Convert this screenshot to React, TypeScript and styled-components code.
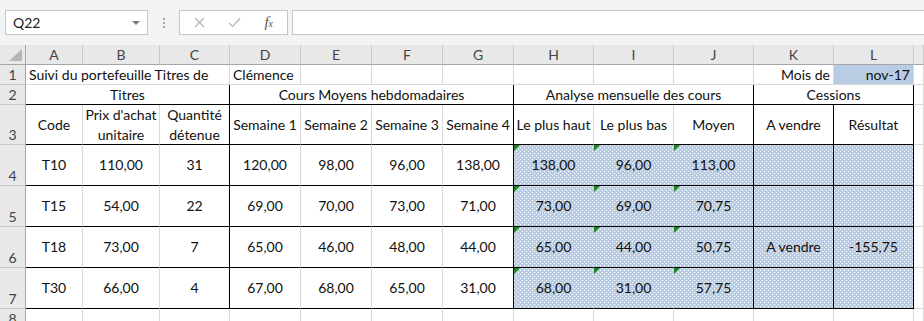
import styled, { createGlobalStyle, css } from "styled-components";

const GlobalStyle = createGlobalStyle`
  body { margin: 0; background: #ffffff; }
  *, *::before, *::after { box-sizing: border-box; }
`;

const FONT = `Lato, "Liberation Sans", sans-serif`;

const LETTERS = ["A", "B", "C", "D", "E", "F", "G", "H", "I", "J", "K", "L", ""];
const WIDTHS = [57, 77, 70, 71, 71, 71, 71, 80, 80, 80, 80, 80];
const HEIGHTS = [20, 20, 40, 41, 41, 41, 41, 20];

type Spec = { text?: string; span?: number; align?: "left" | "center" | "right" };

const rowsData: Spec[][] = [
  [
    { text: "Suivi du portefeuille Titres de", span: 3, align: "left" },
    { text: "Clémence", align: "left" },
    {}, {}, {}, {}, {}, {},
    { text: "Mois de", align: "right" },
    { text: "nov-17", align: "right" },
  ],
  [
    { text: "Titres", span: 3 },
    { text: "Cours Moyens hebdomadaires", span: 4 },
    { text: "Analyse mensuelle des cours", span: 3 },
    { text: "Cessions", span: 2 },
  ],
  [
    { text: "Code" },
    { text: "Prix d'achat\nunitaire" },
    { text: "Quantité\ndétenue" },
    { text: "Semaine 1" },
    { text: "Semaine 2" },
    { text: "Semaine 3" },
    { text: "Semaine 4" },
    { text: "Le plus haut" },
    { text: "Le plus bas" },
    { text: "Moyen" },
    { text: "A vendre" },
    { text: "Résultat" },
  ],
  ...[
    ["T10", "110,00", "31", "120,00", "98,00", "96,00", "138,00", "138,00", "96,00", "113,00", "", ""],
    ["T15", "54,00", "22", "69,00", "70,00", "73,00", "71,00", "73,00", "69,00", "70,75", "", ""],
    ["T18", "73,00", "7", "65,00", "46,00", "48,00", "44,00", "65,00", "44,00", "50,75", "A vendre", "-155,75"],
    ["T30", "66,00", "4", "67,00", "68,00", "65,00", "31,00", "68,00", "31,00", "57,75", "", ""],
  ].map((r) => r.map((text) => ({ text }))),
  Array.from({ length: 12 }, () => ({})),
];

export default function App() {
  return (
    <>
      <GlobalStyle />
      <Window>
        <Toolbar>
          <NameBox>
            <NameText>Q22</NameText>
            <DropArrow />
          </NameBox>
          <Grip>
            <Dot />
            <Dot />
            <Dot />
          </Grip>
          <FxGroup>
            <svg width="11" height="11" viewBox="0 0 11 11">
              <path d="M1 1 L10 10 M10 1 L1 10" stroke="#b3b3b3" strokeWidth="1.2" fill="none" />
            </svg>
            <svg width="13" height="11" viewBox="0 0 13 11">
              <path d="M1 6 L4.5 9.5 L12 1.5" stroke="#b3b3b3" strokeWidth="1.2" fill="none" />
            </svg>
            <FxLabel>
              f<small>x</small>
            </FxLabel>
          </FxGroup>
          <FormulaInput />
        </Toolbar>
        <Sheet>
          <Corner>
            <CornerMark />
          </Corner>
          {LETTERS.map((l, i) => (
            <ColHead key={"h" + i}>{l}</ColHead>
          ))}
          {rowsData.map((row, r) => {
            const rowNo = r + 1;
            let col = 0;
            const cells = row.map((spec, k) => {
              const span = spec.span ?? 1;
              const first = col;
              const last = col + span - 1;
              col += span;
              const framed = rowNo >= 2 && rowNo <= 7;
              const body = rowNo >= 4 && rowNo <= 7;
              const dots = body && first >= 7 && first <= 11;
              let right: Edge = "grid";
              if (framed && [2, 6, 9, 10, 11].includes(last)) right = "black";
              else if (dots && (last === 7 || last === 8)) right = "none";
              return (
                <Cell
                  key={k}
                  $span={span}
                  $align={spec.align ?? "center"}
                  $right={right}
                  $bottom={framed ? "black" : "grid"}
                  $fill={dots ? "dots" : rowNo === 1 && first === 11 ? "solid" : "none"}
                  $flag={body && first >= 7 && first <= 9}
                >
                  {spec.text}
                </Cell>
              );
            });
            return [
              <RowHead key={"r" + r} $h={HEIGHTS[r]}>
                {rowNo}
              </RowHead>,
              ...cells,
              <Cell key="m" $span={1} $align="left" $right="grid" $bottom="grid" $fill="none" $flag={false} />,
            ];
          })}
        </Sheet>
      </Window>
    </>
  );
}

type Edge = "grid" | "black" | "none";

const Window = styled.div`
  width: 924px;
  height: 321px;
  overflow: hidden;
  background: #f3f3f3;
  font-family: ${FONT};
`;

const Toolbar = styled.div`
  display: flex;
  align-items: stretch;
  height: 45px;
  padding: 10px 0 10px 5px;
  background: #f3f3f3;
`;

const NameBox = styled.div`
  width: 143px;
  display: flex;
  align-items: center;
  justify-content: space-between;
  padding: 0 7px 0 7px;
  background: #fff;
  border: 1px solid #c6c6c6;
`;

const NameText = styled.span`
  font-size: 14px;
  color: #222;
`;

const DropArrow = styled.span`
  width: 0;
  height: 0;
  border-left: 4px solid transparent;
  border-right: 4px solid transparent;
  border-top: 4px solid #7a7a7a;
`;

const Grip = styled.div`
  width: 31px;
  display: flex;
  flex-direction: column;
  align-items: center;
  justify-content: center;
  gap: 2px;
`;

const Dot = styled.span`
  width: 2px;
  height: 2px;
  background: #a8a8a8;
`;

const FxGroup = styled.div`
  width: 109px;
  display: flex;
  align-items: center;
  justify-content: space-between;
  padding: 0 14px 0 14px;
  background: #fff;
  border: 1px solid #c6c6c6;
`;

const FxLabel = styled.span`
  font-family: "Liberation Serif", serif;
  font-style: italic;
  font-size: 15px;
  color: #555;
  small {
    font-size: 10px;
  }
`;

const FormulaInput = styled.div`
  flex: 1;
  margin-left: 4px;
  margin-right: -2px;
  background: #fff;
  border: 1px solid #c6c6c6;
`;

const Sheet = styled.div`
  display: grid;
  grid-template-columns: 26px ${WIDTHS.map((w) => w + "px").join(" ")} 1fr;
  grid-template-rows: 20px ${HEIGHTS.map((h) => h + "px").join(" ")};
  height: 276px;
  overflow: hidden;
  background: #fff;
  font-size: 14px;
  color: #111;
`;

const headBase = css`
  background: #e8e8e8;
  color: #444;
  font-size: 14px;
  display: flex;
`;

const Corner = styled.div`
  ${headBase};
  position: relative;
  border-right: 1px solid #a6a6a6;
  border-bottom: 1px solid #a6a6a6;
`;

const CornerMark = styled.span`
  position: absolute;
  right: 3px;
  bottom: 3px;
  width: 0;
  height: 0;
  border-left: 13px solid transparent;
  border-bottom: 12px solid #b5b5b5;
`;

const ColHead = styled.div`
  ${headBase};
  align-items: center;
  justify-content: center;
  border-right: 1px solid #c9c9c9;
  border-bottom: 1px solid #a6a6a6;
`;

const RowHead = styled.div<{ $h: number }>`
  ${headBase};
  align-items: ${(p) => (p.$h > 20 ? "flex-end" : "center")};
  justify-content: center;
  padding-bottom: ${(p) => (p.$h > 20 ? "1px" : "0")};
  border-right: 1px solid #a6a6a6;
  border-bottom: 1px solid #c9c9c9;
`;

const edgeColor = (e: Edge) => (e === "black" ? "#000" : e === "none" ? "transparent" : "#d9d9d9");

const Cell = styled.div<{
  $span: number;
  $align: "left" | "center" | "right";
  $right: Edge;
  $bottom: Edge;
  $fill: "none" | "solid" | "dots";
  $flag: boolean;
}>`
  grid-column: span ${(p) => p.$span};
  position: relative;
  display: flex;
  align-items: center;
  justify-content: ${(p) => (p.$align === "left" ? "flex-start" : p.$align === "right" ? "flex-end" : "center")};
  text-align: center;
  white-space: pre;
  overflow: visible;
  line-height: 20px;
  padding: 0 ${(p) => (p.$align === "center" ? "0" : "3px")};
  border-right: 1px solid ${(p) => edgeColor(p.$right)};
  border-bottom: 1px solid ${(p) => edgeColor(p.$bottom)};
  background-color: ${(p) => (p.$fill === "none" ? "#fff" : "#b8cce4")};
  ${(p) =>
    p.$fill === "dots" &&
    css`
      background-image: conic-gradient(at 1px 1px, transparent 270deg, #ffffff 270deg),
        conic-gradient(at 1px 1px, transparent 270deg, #ffffff 270deg);
      background-size: 4px 4px, 4px 4px;
      background-position: 0 0, 2px 2px;
    `}
  ${(p) =>
    p.$flag &&
    css`
      &::before {
        content: "";
        position: absolute;
        left: 0;
        top: 0;
        border-top: 6px solid #1b8a1b;
        border-right: 6px solid transparent;
      }
    `}
`;
